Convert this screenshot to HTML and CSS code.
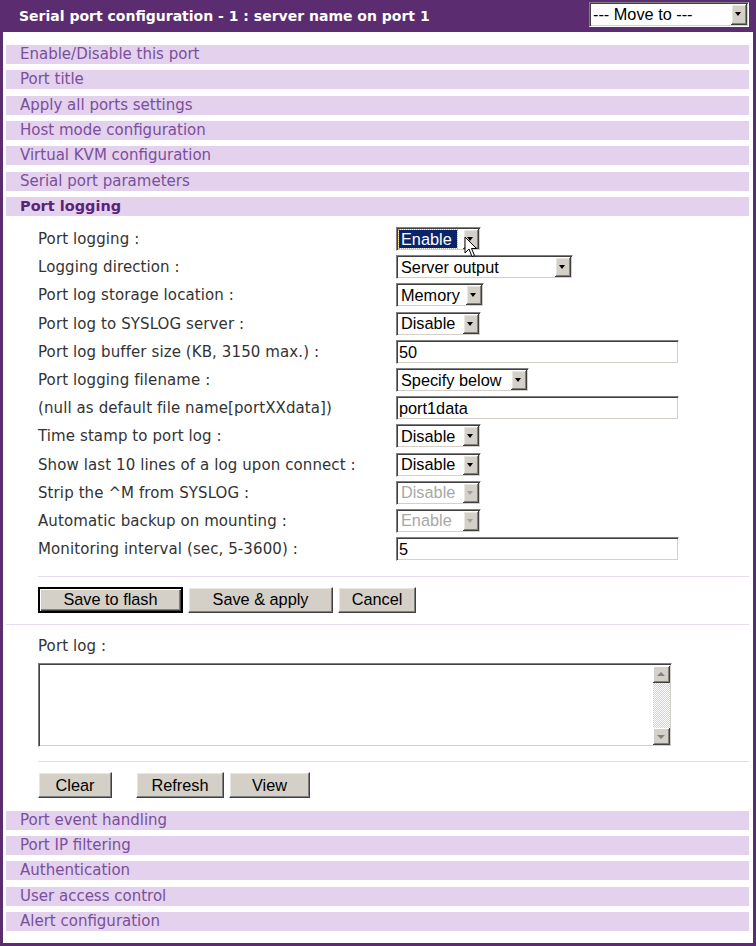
FILE: index.html
```html
<!DOCTYPE html>
<html>
<head>
<meta charset="utf-8">
<title>Serial port configuration</title>
<link rel="stylesheet" href="styles.css">
</head>
<body>
<div class="frame">
  <div class="header">
    <span class="title">Serial port configuration - 1 : server name on port 1</span>
    <div class="sel sel-move"><span class="val">--- Move to ---</span><span class="arr"></span></div>
  </div>
  <div class="content">
    <div class="secs top">
      <div class="sec">Enable/Disable this port</div>
      <div class="sec">Port title</div>
      <div class="sec">Apply all ports settings</div>
      <div class="sec">Host mode configuration</div>
      <div class="sec">Virtual KVM configuration</div>
      <div class="sec">Serial port parameters</div>
      <div class="sec active">Port logging</div>
    </div>

    <div class="form">
      <div class="frow"><span class="lbl">Port logging :</span>
        <div class="sel w85 focus"><span class="val"><span class="hl">Enable</span></span><span class="arr"></span></div></div>
      <div class="frow"><span class="lbl">Logging direction :</span>
        <div class="sel w177"><span class="val">Server output</span><span class="arr"></span></div></div>
      <div class="frow"><span class="lbl">Port log storage location :</span>
        <div class="sel w88"><span class="val">Memory</span><span class="arr"></span></div></div>
      <div class="frow"><span class="lbl">Port log to SYSLOG server :</span>
        <div class="sel w85"><span class="val">Disable</span><span class="arr"></span></div></div>
      <div class="frow"><span class="lbl">Port log buffer size (KB, 3150 max.) :</span>
        <div class="inp">50</div></div>
      <div class="frow"><span class="lbl">Port logging filename :</span>
        <div class="sel w133"><span class="val">Specify below</span><span class="arr"></span></div></div>
      <div class="frow"><span class="lbl">(null as default file name[portXXdata])</span>
        <div class="inp">port1data</div></div>
      <div class="frow"><span class="lbl">Time stamp to port log :</span>
        <div class="sel w85"><span class="val">Disable</span><span class="arr"></span></div></div>
      <div class="frow"><span class="lbl">Show last 10 lines of a log upon connect :</span>
        <div class="sel w85"><span class="val">Disable</span><span class="arr"></span></div></div>
      <div class="frow"><span class="lbl">Strip the ^M from SYSLOG :</span>
        <div class="sel w85 dis"><span class="val">Disable</span><span class="arr"></span></div></div>
      <div class="frow"><span class="lbl">Automatic backup on mounting :</span>
        <div class="sel w85 dis"><span class="val">Enable</span><span class="arr"></span></div></div>
      <div class="frow"><span class="lbl">Monitoring interval (sec, 5-3600) :</span>
        <div class="inp">5</div></div>
      <svg class="cursor" width="14" height="22" viewBox="0 0 14 22"><path d="M1 1 L1 17 L5 13 L8 20.5 L10.5 19.5 L7.5 12.5 L12.5 12.5 Z" fill="#fff" stroke="#000" stroke-width="1" stroke-linejoin="miter"/></svg>
    </div>

    <div class="sep indent s1"></div>
    <div class="btns b1">
      <button class="btn def w145">Save to flash</button>
      <button class="btn w145">Save &amp; apply</button>
      <button class="btn w78">Cancel</button>
    </div>
    <div class="sep full s2"></div>

    <div class="log">
      <div class="lbl loglbl">Port log :</div>
      <div class="ta">
        <div class="ta-body"></div>
        <div class="sb">
          <div class="sbtn"><span class="up"></span></div>
          <div class="track"></div>
          <div class="sbtn"><span class="down"></span></div>
        </div>
      </div>
    </div>
    <div class="sep indent s3"></div>
    <div class="btns b2">
      <button class="btn w74">Clear</button>
      <button class="btn w88 ml24">Refresh</button>
      <button class="btn w81">View</button>
    </div>

    <div class="secs bottom">
      <div class="sec">Port event handling</div>
      <div class="sec">Port IP filtering</div>
      <div class="sec">Authentication</div>
      <div class="sec">User access control</div>
      <div class="sec">Alert configuration</div>
    </div>
  </div>
</div>
</body>
</html>
```

FILE: styles.css
```css
html, body {
  margin: 0;
  padding: 0;
  background: #fff;
}
.frame {
  width: 756px;
  height: 946px;
  box-sizing: border-box;
  background: #5b2c6f;
  padding: 0 3px 3px 3px;
  display: flex;
  flex-direction: column;
}
.header {
  height: 32px;
  display: flex;
  align-items: center;
  justify-content: space-between;
  padding: 0 1px 0 16px;
}
.title {
  font-family: "DejaVu Sans", Verdana, sans-serif;
  font-weight: bold;
  font-size: 14px;
  color: #fff;
  margin-top: -1px;
}
.content {
  flex: 1;
  background: #fff;
  padding: 13px 4px 0 3px;
  position: relative;
}
.secs {
  display: flex;
  flex-direction: column;
  gap: 6.33px;
}
.sec {
  height: 19px;
  line-height: 19px;
  background: #e3d1ed;
  padding-left: 14px;
  font-family: "DejaVu Sans", Verdana, sans-serif;
  font-size: 15px;
  color: #7a4f9c;
}
.sec.active {
  font-weight: bold;
  color: #5b2376;
  font-size: 14.5px;
}
.form {
  padding: 9px 0 0 32px;
  position: relative;
}
.frow {
  height: 28.2px;
  display: grid;
  grid-template-columns: 358px auto;
  align-items: center;
}
.lbl {
  font-family: "DejaVu Sans", Verdana, sans-serif;
  font-size: 15px;
  letter-spacing: 0.1px;
  color: #333;
}
/* Windows classic select */
.sel {
  height: 24px;
  box-sizing: border-box;
  border: 1px solid;
  border-color: #808080 #fff #fff #808080;
  box-shadow: inset 1px 1px 0 #404040, inset -1px -1px 0 #d4d0c8;
  background: #fff;
  display: flex;
  align-items: stretch;
  padding: 1px;
  font-family: "Liberation Sans", Arial, sans-serif;
  font-size: 16.3px;
  color: #000;
}
.sel .val {
  flex: 1;
  display: flex;
  align-items: center;
  padding-left: 3px;
  white-space: nowrap;
  overflow: hidden;
}
.sel .arr {
  width: 16px;
  flex: none;
  background: #d4d0c8;
  box-shadow: inset -1px -1px 0 #404040, inset 1px 1px 0 #fff, inset -2px -2px 0 #808080, inset 2px 2px 0 #e8e6e0;
  position: relative;
}
.sel .arr::after {
  content: "";
  position: absolute;
  left: 4px;
  top: 8px;
  border-left: 3.5px solid transparent;
  border-right: 3.5px solid transparent;
  border-top: 4px solid #000;
}
.sel.dis .val { color: #a8a8a8; }
.sel.dis .arr::after { border-top-color: #a0a0a0; }
.sel.focus .val { padding-left: 1px; }
.sel.focus .hl {
  background: #0a246a;
  color: #fff;
  padding: 0 5px 0 2px;
  height: 18px;
  line-height: 18px;
  outline: 1px dotted #c8b060;
}
.sel-move {
  width: 160px;
  height: 25px;
  margin-top: -3px;
  margin-right: 3px;
}
.sel-move .val { padding-left: 2px; }
.w85 { width: 85px; }
.w88 { width: 88px; }
.w133 { width: 133px; }
.w177 { width: 177px; }
.inp {
  width: 283px;
  height: 24px;
  box-sizing: border-box;
  border: 1px solid;
  border-color: #808080 #fff #fff #808080;
  box-shadow: inset 1px 1px 0 #404040, inset -1px -1px 0 #d4d0c8;
  background: #fff;
  font-family: "Liberation Sans", Arial, sans-serif;
  font-size: 16.3px;
  line-height: 22px;
  padding-left: 2px;
  color: #000;
}
.cursor {
  position: absolute;
  left: 458px;
  top: 20px;
}
.sep {
  height: 1px;
  background: #e6dbef;
}
.sep.indent { margin-left: 32px; }
.s1 { margin-top: 12.5px; }
.s2 { margin-top: 11.5px; }
.s3 { margin-top: 14px; }
.btns {
  display: flex;
  padding-left: 32px;
  gap: 5px;
}
.b1 { margin-top: 10px; }
.b2 { margin-top: 10px; margin-bottom: 12.5px; }
.btn {
  height: 26px;
  box-sizing: border-box;
  background: #d4d0c8;
  border: 1px solid;
  border-color: #fff #404040 #404040 #fff;
  box-shadow: inset -1px -1px 0 #808080, inset 1px 1px 0 #e8e6e0;
  font-family: "Liberation Sans", Arial, sans-serif;
  font-size: 16.3px;
  color: #000;
  padding: 0;
  margin: 0;
}
.btn.def {
  border: 2px solid #000;
  box-shadow: inset 1px 1px 0 #fff, inset -1px -1px 0 #404040, inset -2px -2px 0 #808080;
}
.w145 { width: 145px; }
.w78 { width: 78px; }
.w74 { width: 74px; }
.w81 { width: 81px; }
.ml24 { margin-left: 19px; }
.log {
  padding: 12px 0 0 32px;
}
.loglbl {
  display: block;
  line-height: 18px;
  height: 18px;
}
.ta {
  margin-top: 8px;
  width: 634px;
  height: 84px;
  box-sizing: border-box;
  border: 1px solid;
  border-color: #808080 #fff #fff #808080;
  box-shadow: inset 1px 1px 0 #404040, inset -1px -1px 0 #d4d0c8;
  background: #fff;
  display: flex;
  padding: 2px 1px 1px 2px;
}
.ta-body { flex: 1; }
.sb {
  width: 17px;
  display: flex;
  flex-direction: column;
}
.sbtn {
  height: 17px;
  flex: none;
  background: #d4d0c8;
  box-shadow: inset -1px -1px 0 #404040, inset 1px 1px 0 #fff, inset -2px -2px 0 #808080;
  position: relative;
}
.track {
  flex: 1;
  background-color: #fff;
  background-image: repeating-conic-gradient(#d4d0c8 0 25%, #fff 0 50%);
  background-size: 2px 2px;
}
.sbtn .up, .sbtn .down {
  position: absolute;
  left: 4px;
  width: 0;
  height: 0;
  border-left: 4px solid transparent;
  border-right: 4px solid transparent;
}
.sbtn .up { top: 6px; border-bottom: 4px solid #808080; }
.sbtn .down { top: 7px; border-top: 4px solid #808080; }
```
